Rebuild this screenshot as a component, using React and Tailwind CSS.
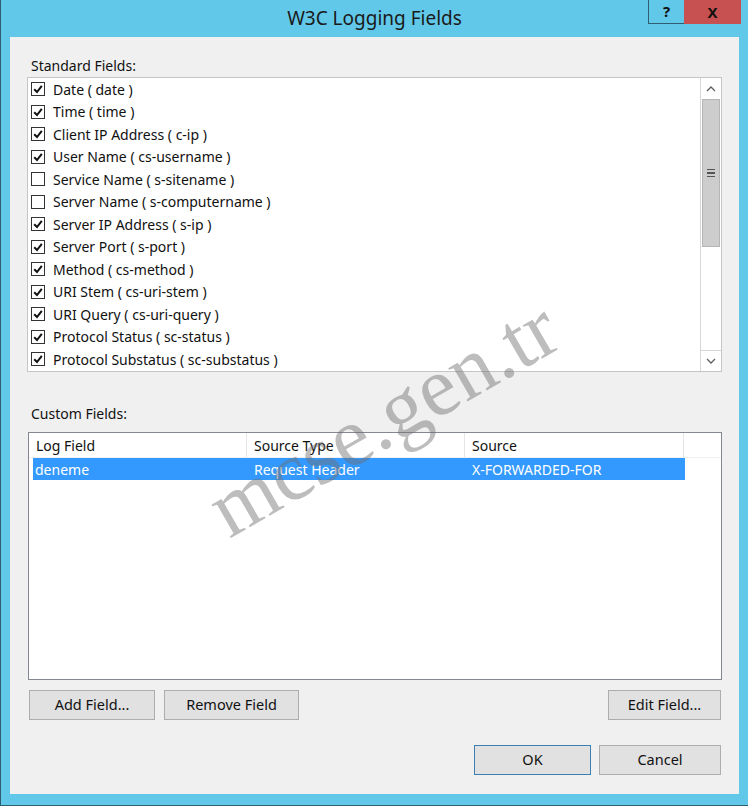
import React from "react";

const fields = [
  ["Date ( date )", true],
  ["Time ( time )", true],
  ["Client IP Address ( c-ip )", true],
  ["User Name ( cs-username )", true],
  ["Service Name ( s-sitename )", false],
  ["Server Name ( s-computername )", false],
  ["Server IP Address ( s-ip )", true],
  ["Server Port ( s-port )", true],
  ["Method ( cs-method )", true],
  ["URI Stem ( cs-uri-stem )", true],
  ["URI Query ( cs-uri-query )", true],
  ["Protocol Status ( sc-status )", true],
  ["Protocol Substatus ( sc-substatus )", true],
];

function CheckBox({ checked }) {
  return (
    <div className="w-[14px] h-[14px] border border-[#333] bg-white flex items-center justify-center shrink-0">
      {checked && (
        <svg width="10" height="10" viewBox="0 0 10 10">
          <path d="M1.2 5.2 L4 8 L8.8 1.8" fill="none" stroke="#111" strokeWidth="2" />
        </svg>
      )}
    </div>
  );
}

function Button({ children, className = "", primary }) {
  return (
    <div
      className={
        "h-[30px] flex items-center justify-center bg-[#e1e1e1] border text-[14.5px] text-[#111] " +
        (primary ? "border-[#3c7fb1] " : "border-[#adadad] ") +
        className
      }
    >
      {children}
    </div>
  );
}

export default function App() {
  return (
    <div className="relative w-[748px] h-[806px] overflow-hidden bg-[#62c8e9] border-l border-b border-[#2e5f70] font-['Noto_Sans',sans-serif] text-[#111]">
      {/* title bar */}
      <div className="h-[37px] flex items-center justify-center text-[19px] text-[#1a1a1a]">
        W3C Logging Fields
      </div>
      <div className="absolute top-0 left-[647px] flex">
        <div className="w-[36px] h-[24px] border-l border-b border-[#2e5f70] flex items-center justify-center text-[15px] font-bold">
          ?
        </div>
        <div className="w-[57px] h-[24px] bg-[#c75050] flex items-center justify-center text-[15px] font-bold">
          X
        </div>
      </div>

      {/* client area */}
      <div className="ml-[9px] w-[729px] h-[757px] bg-[#f0f0f0] flex flex-col px-[17px]">
        <div className="mt-[20px] h-[18px] leading-[18px] text-[14px] pl-[4px]">Standard Fields:</div>
        <div className="mt-[2px] h-[295px] border border-[#c5c5c5] bg-white flex">
          <div className="flex-1">
            {fields.map(([label, checked]) => (
              <div key={label} className="h-[22.5px] flex items-center gap-[8px] pl-[3px] text-[14px]">
                <CheckBox checked={checked} />
                <span>{label}</span>
              </div>
            ))}
          </div>
          <div className="w-[21px] border-l border-[#d6d6d6] flex flex-col">
            <div className="h-[21px] flex items-center justify-center">
              <svg width="10" height="6" viewBox="0 0 10 6">
                <path d="M1 5 L5 1 L9 5" fill="none" stroke="#606060" strokeWidth="1.3" />
              </svg>
            </div>
            <div className="h-[148px] mx-[1px] bg-[#cdcdcd] border border-[#b5b5b5] flex items-center justify-center">
              <div className="flex flex-col gap-[2px]">
                <div className="w-[8px] h-[1.5px] bg-[#555]" />
                <div className="w-[8px] h-[1.5px] bg-[#555]" />
                <div className="w-[8px] h-[1.5px] bg-[#555]" />
              </div>
            </div>
            <div className="flex-1" />
            <div className="h-[21px] border-t border-[#d6d6d6] flex items-center justify-center">
              <svg width="10" height="6" viewBox="0 0 10 6">
                <path d="M1 1 L5 5 L9 1" fill="none" stroke="#606060" strokeWidth="1.3" />
              </svg>
            </div>
          </div>
        </div>

        <div className="mt-[33px] h-[18px] leading-[18px] text-[14px] pl-[4px]">Custom Fields:</div>
        <div className="mt-[9px] ml-[1px] h-[248px] border border-[#828790] bg-white flex flex-col">
          <div className="h-[25px] flex text-[14px] border-b border-[#f0f0f0]">
            <div className="w-[218px] pl-[7px] flex items-center border-r border-[#e5e5e5]">Log Field</div>
            <div className="w-[218px] pl-[7px] flex items-center border-r border-[#e5e5e5]">Source Type</div>
            <div className="w-[219px] pl-[7px] flex items-center border-r border-[#e5e5e5]">Source</div>
          </div>
          <div className="ml-[4px] w-[652px] h-[22px] bg-[#3399ff] text-white flex text-[14px]">
            <div className="w-[214px] pl-[2px] flex items-center">deneme</div>
            <div className="w-[218px] pl-[7px] flex items-center">Request Header</div>
            <div className="w-[218px] pl-[7px] flex items-center">X-FORWARDED-FOR</div>
          </div>
        </div>

        <div className="mt-[10px] flex gap-[9px] pl-[2px] pr-[1px]">
          <Button className="w-[126px]">Add Field...</Button>
          <Button className="w-[135px]">Remove Field</Button>
          <div className="flex-1" />
          <Button className="w-[113px]">Edit Field...</Button>
        </div>

        <div className="mt-[25px] flex justify-end gap-[8px] pr-[1px]">
          <Button primary className="w-[117px]">OK</Button>
          <Button className="w-[122px]">Cancel</Button>
        </div>
      </div>

      {/* watermark */}
      <div className="absolute left-[382px] top-[418px] -translate-x-1/2 -translate-y-1/2 -rotate-[30deg] whitespace-nowrap font-['Liberation_Serif',serif] text-[84px] leading-none text-[#6f6f6f] opacity-45 pointer-events-none">
        mcse.gen.tr
      </div>
    </div>
  );
}
